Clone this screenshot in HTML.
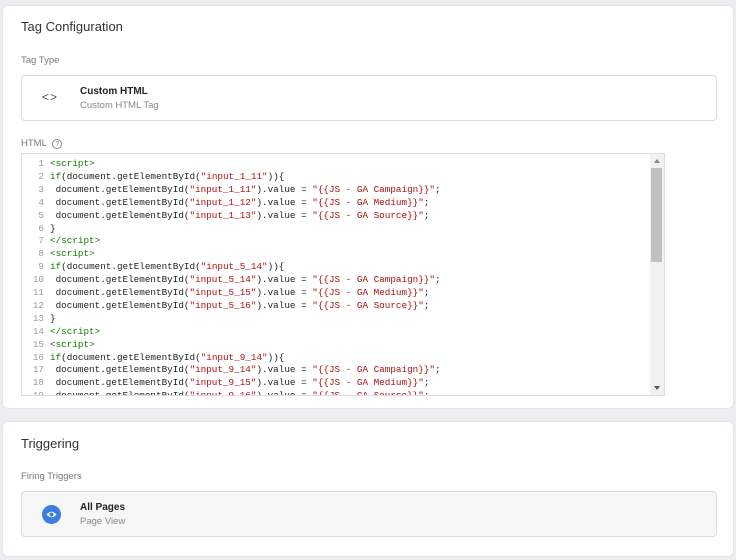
<!DOCTYPE html>
<html><head><style>
*{margin:0;padding:0;box-sizing:border-box}
body{width:736px;height:560px;background:#eceef1;font-family:"Liberation Sans",sans-serif;position:relative;overflow:hidden}
.card{position:absolute;left:2px;width:732px;background:#fff;border-radius:6px;border:1px solid #e4e6e8}
.h{position:absolute;left:18px;font-size:13px;color:#333}
.lbl{position:absolute;left:18px;font-size:9.5px;color:#777}
.box{position:absolute;left:18px;width:696px;height:46px;border:1px solid #dcdcdc;border-radius:4px}
.t1{position:absolute;left:58px;top:10px;font-size:10px;font-weight:bold;color:#222}
.t2{position:absolute;left:58px;top:24px;font-size:9.5px;color:#888}
.code{position:absolute;left:18px;top:147px;width:644px;height:243px;border:1px solid #ddd;overflow:hidden;font-family:"Liberation Mono",monospace;font-size:9.3px;line-height:12.9px;padding-top:4px}
.ln{position:absolute;left:0;width:22px;text-align:right;color:#999}
.c{position:absolute;left:28px;white-space:pre;color:#222}
.g{color:#117700}.r{color:#a11}
.sb{position:absolute;right:0;top:0;width:14px;height:100%;background:#f1f1f1}
</style></head><body>
<div class="card" style="top:5px;height:404px">
<div class="h" style="top:13px">Tag Configuration</div>
<div class="lbl" style="top:49px">Tag Type</div>
<div class="box" style="top:69px">
<div style="position:absolute;left:20px;top:14px;font-size:12px;color:#555;letter-spacing:1px">&lt;&gt;</div>
<div class="t1">Custom HTML</div><div class="t2">Custom HTML Tag</div></div>
<div class="lbl" style="top:132px">HTML <span style="display:inline-block;width:10px;height:10px;border:1px solid #888;border-radius:50%;font-size:7px;text-align:center;line-height:9px;margin-left:3px">?</span></div>
<div class="code">
<div style="position:relative">
<div class="ln" style="top:0">1</div><div class="c g" style="top:0">&lt;script&gt;</div>
<div class="ln" style="top:12.9px">2</div><div class="c" style="top:12.9px"><span class="g">if</span>(document.getElementById(<span class="r">"input_1_11"</span>)){</div>
<div class="ln" style="top:25.8px">3</div><div class="c" style="top:25.8px"> document.getElementById(<span class="r">"input_1_11"</span>).value = <span class="r">"{{JS - GA Campaign}}"</span>;</div>
<div class="ln" style="top:38.7px">4</div><div class="c" style="top:38.7px"> document.getElementById(<span class="r">"input_1_12"</span>).value = <span class="r">"{{JS - GA Medium}}"</span>;</div>
<div class="ln" style="top:51.6px">5</div><div class="c" style="top:51.6px"> document.getElementById(<span class="r">"input_1_13"</span>).value = <span class="r">"{{JS - GA Source}}"</span>;</div>
<div class="ln" style="top:64.5px">6</div><div class="c" style="top:64.5px">}</div>
<div class="ln" style="top:77.4px">7</div><div class="c g" style="top:77.4px">&lt;/script&gt;</div>
<div class="ln" style="top:90.3px">8</div><div class="c g" style="top:90.3px">&lt;script&gt;</div>
<div class="ln" style="top:103.2px">9</div><div class="c" style="top:103.2px"><span class="g">if</span>(document.getElementById(<span class="r">"input_5_14"</span>)){</div>
<div class="ln" style="top:116.1px">10</div><div class="c" style="top:116.1px"> document.getElementById(<span class="r">"input_5_14"</span>).value = <span class="r">"{{JS - GA Campaign}}"</span>;</div>
<div class="ln" style="top:129px">11</div><div class="c" style="top:129px"> document.getElementById(<span class="r">"input_5_15"</span>).value = <span class="r">"{{JS - GA Medium}}"</span>;</div>
<div class="ln" style="top:141.9px">12</div><div class="c" style="top:141.9px"> document.getElementById(<span class="r">"input_5_16"</span>).value = <span class="r">"{{JS - GA Source}}"</span>;</div>
<div class="ln" style="top:154.8px">13</div><div class="c" style="top:154.8px">}</div>
<div class="ln" style="top:167.7px">14</div><div class="c g" style="top:167.7px">&lt;/script&gt;</div>
<div class="ln" style="top:180.6px">15</div><div class="c g" style="top:180.6px">&lt;script&gt;</div>
<div class="ln" style="top:193.5px">16</div><div class="c" style="top:193.5px"><span class="g">if</span>(document.getElementById(<span class="r">"input_9_14"</span>)){</div>
<div class="ln" style="top:206.4px">17</div><div class="c" style="top:206.4px"> document.getElementById(<span class="r">"input_9_14"</span>).value = <span class="r">"{{JS - GA Campaign}}"</span>;</div>
<div class="ln" style="top:219.3px">18</div><div class="c" style="top:219.3px"> document.getElementById(<span class="r">"input_9_15"</span>).value = <span class="r">"{{JS - GA Medium}}"</span>;</div>
<div class="ln" style="top:232.2px">19</div><div class="c" style="top:232.2px"> document.getElementById(<span class="r">"input_9_16"</span>).value = <span class="r">"{{JS - GA Source}}"</span>;</div>
</div>
<div class="sb"><div style="position:absolute;left:1px;top:14px;width:11px;height:94px;background:#c1c1c1"></div>
<div style="position:absolute;left:4px;top:5px;border:3px solid transparent;border-bottom:4px solid #888;border-top:0"></div>
<div style="position:absolute;left:4px;bottom:5px;border:3px solid transparent;border-top:4px solid #555;border-bottom:0"></div></div>
</div>
</div>
<div class="card" style="top:421px;height:136px">
<div class="h" style="top:14px">Triggering</div>
<div class="lbl" style="top:49px">Firing Triggers</div>
<div class="box" style="top:69px;background:#f6f6f6">
<div style="position:absolute;left:20px;top:13px;width:19px;height:19px;border-radius:50%;background:#3b7de0">
<svg width="19" height="19" viewBox="0 0 19 19"><path d="M4.5 9.5Q9.5 4 14.5 9.5Q9.5 15 4.5 9.5Z" fill="#fff"/><circle cx="9.5" cy="9.5" r="2" fill="#3b7de0"/></svg></div>
<div class="t1">All Pages</div><div class="t2">Page View</div></div>
</div>
</body></html>
